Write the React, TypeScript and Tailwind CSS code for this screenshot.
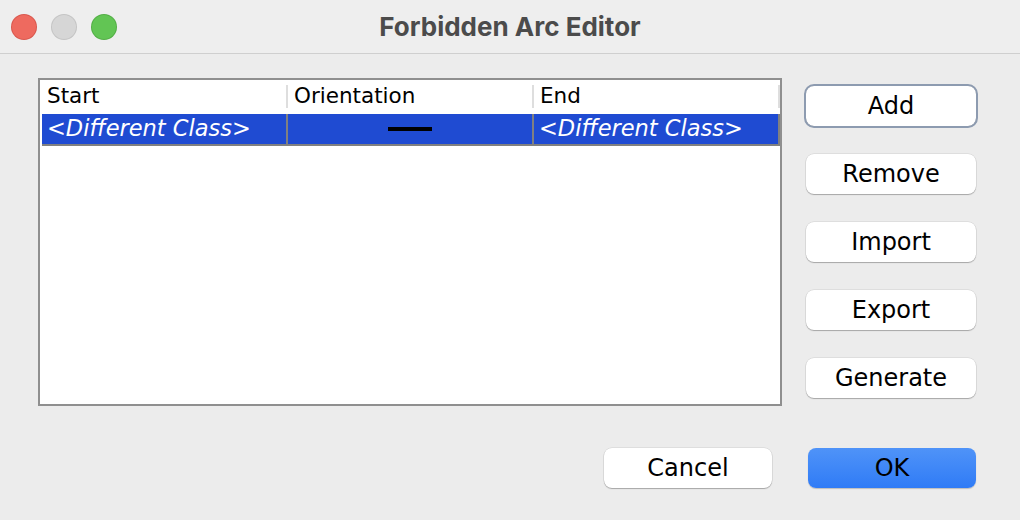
import React from "react";

const body = { fontFamily: '"DejaVu Sans", "Liberation Sans", sans-serif' };

const sideButtons = ["Add", "Remove", "Import", "Export", "Generate"];

function MacButton({ label, focused }: { label: string; focused?: boolean }) {
  return (
    <button
      className={
        "h-[40px] w-[170px] rounded-[8px] bg-white text-[24px] leading-none text-black shadow-[0_1px_1px_rgba(0,0,0,0.25),0_0_0_0.5px_rgba(0,0,0,0.12)] " +
        (focused ? "outline outline-2 outline-offset-0 outline-[#8d9bb0]" : "")
      }
      style={body}
    >
      {label}
    </button>
  );
}

export default function App() {
  return (
    <div className="flex h-[520px] w-[1020px] flex-col bg-[#ececec]">
      {/* Title bar */}
      <div className="grid h-[54px] grid-cols-[1fr_auto_1fr] items-center border-b border-[#cfcfcf] bg-[#eeeeee]">
        <div className="flex items-center gap-[16px] pl-[12px]">
          <span className="h-[24px] w-[24px] rounded-full bg-[#ee6a5f] ring-1 ring-[#d9574d]" />
          <span className="h-[24px] w-[24px] rounded-full bg-[#d6d6d6] ring-1 ring-[#c4c4c4]" />
          <span className="h-[24px] w-[24px] rounded-full bg-[#62c554] ring-1 ring-[#52ae45]" />
        </div>
        <div
          className="text-[26px] font-bold text-[#4b4b4b]"
          style={{ fontFamily: 'Inter, "Liberation Sans", sans-serif' }}
        >
          Forbidden Arc Editor
        </div>
        <div />
      </div>

      {/* Content */}
      <div className="flex pl-[38px] pt-[24px]">
        <div className="h-[328px] w-[744px] border-2 border-[#8f8f8f] bg-white pl-[2px]" style={body}>
          <div className="flex h-[33px] items-center text-[21.5px] text-black">
            <div className="flex h-[23px] w-[246px] items-center border-r-2 border-[#dedede] pl-[5px]">Start</div>
            <div className="flex h-[23px] w-[246px] items-center border-r-2 border-[#dedede] pl-[6px]">Orientation</div>
            <div className="flex h-[23px] w-[246px] items-center border-r-2 border-[#dedede] pl-[6px]">End</div>
          </div>
          <div className="mt-px flex h-[32px] border-b-2 border-[#808080] bg-[#1f4bd2] text-[22.5px] italic text-white">
            <div className="flex w-[246px] items-center border-r-2 border-[#808080] pl-[5px]">&lt;Different Class&gt;</div>
            <div className="flex w-[246px] items-center justify-center border-r-2 border-[#808080]">
              <span className="h-[4px] w-[44px] bg-black" />
            </div>
            <div className="flex w-[246px] items-center border-r-2 border-[#808080] pl-[5px]">&lt;Different Class&gt;</div>
          </div>
        </div>

        <div className="ml-[24px] flex flex-col gap-[28px] pt-[8px]">
          {sideButtons.map((b, i) => (
            <MacButton key={b} label={b} focused={i === 0} />
          ))}
        </div>
      </div>

      {/* Footer */}
      <div className="flex justify-end gap-[36px] pr-[44px] pt-[42px]">
        <button
          className="h-[40px] w-[168px] rounded-[8px] bg-white text-[24px] leading-none text-black shadow-[0_1px_1px_rgba(0,0,0,0.25),0_0_0_0.5px_rgba(0,0,0,0.12)]"
          style={body}
        >
          Cancel
        </button>
        <button
          className="h-[40px] w-[168px] rounded-[8px] bg-gradient-to-b from-[#4f93f8] to-[#2f7bf6] text-[24px] leading-none text-black shadow-[0_1px_1px_rgba(0,0,0,0.2)]"
          style={body}
        >
          OK
        </button>
      </div>
    </div>
  );
}
